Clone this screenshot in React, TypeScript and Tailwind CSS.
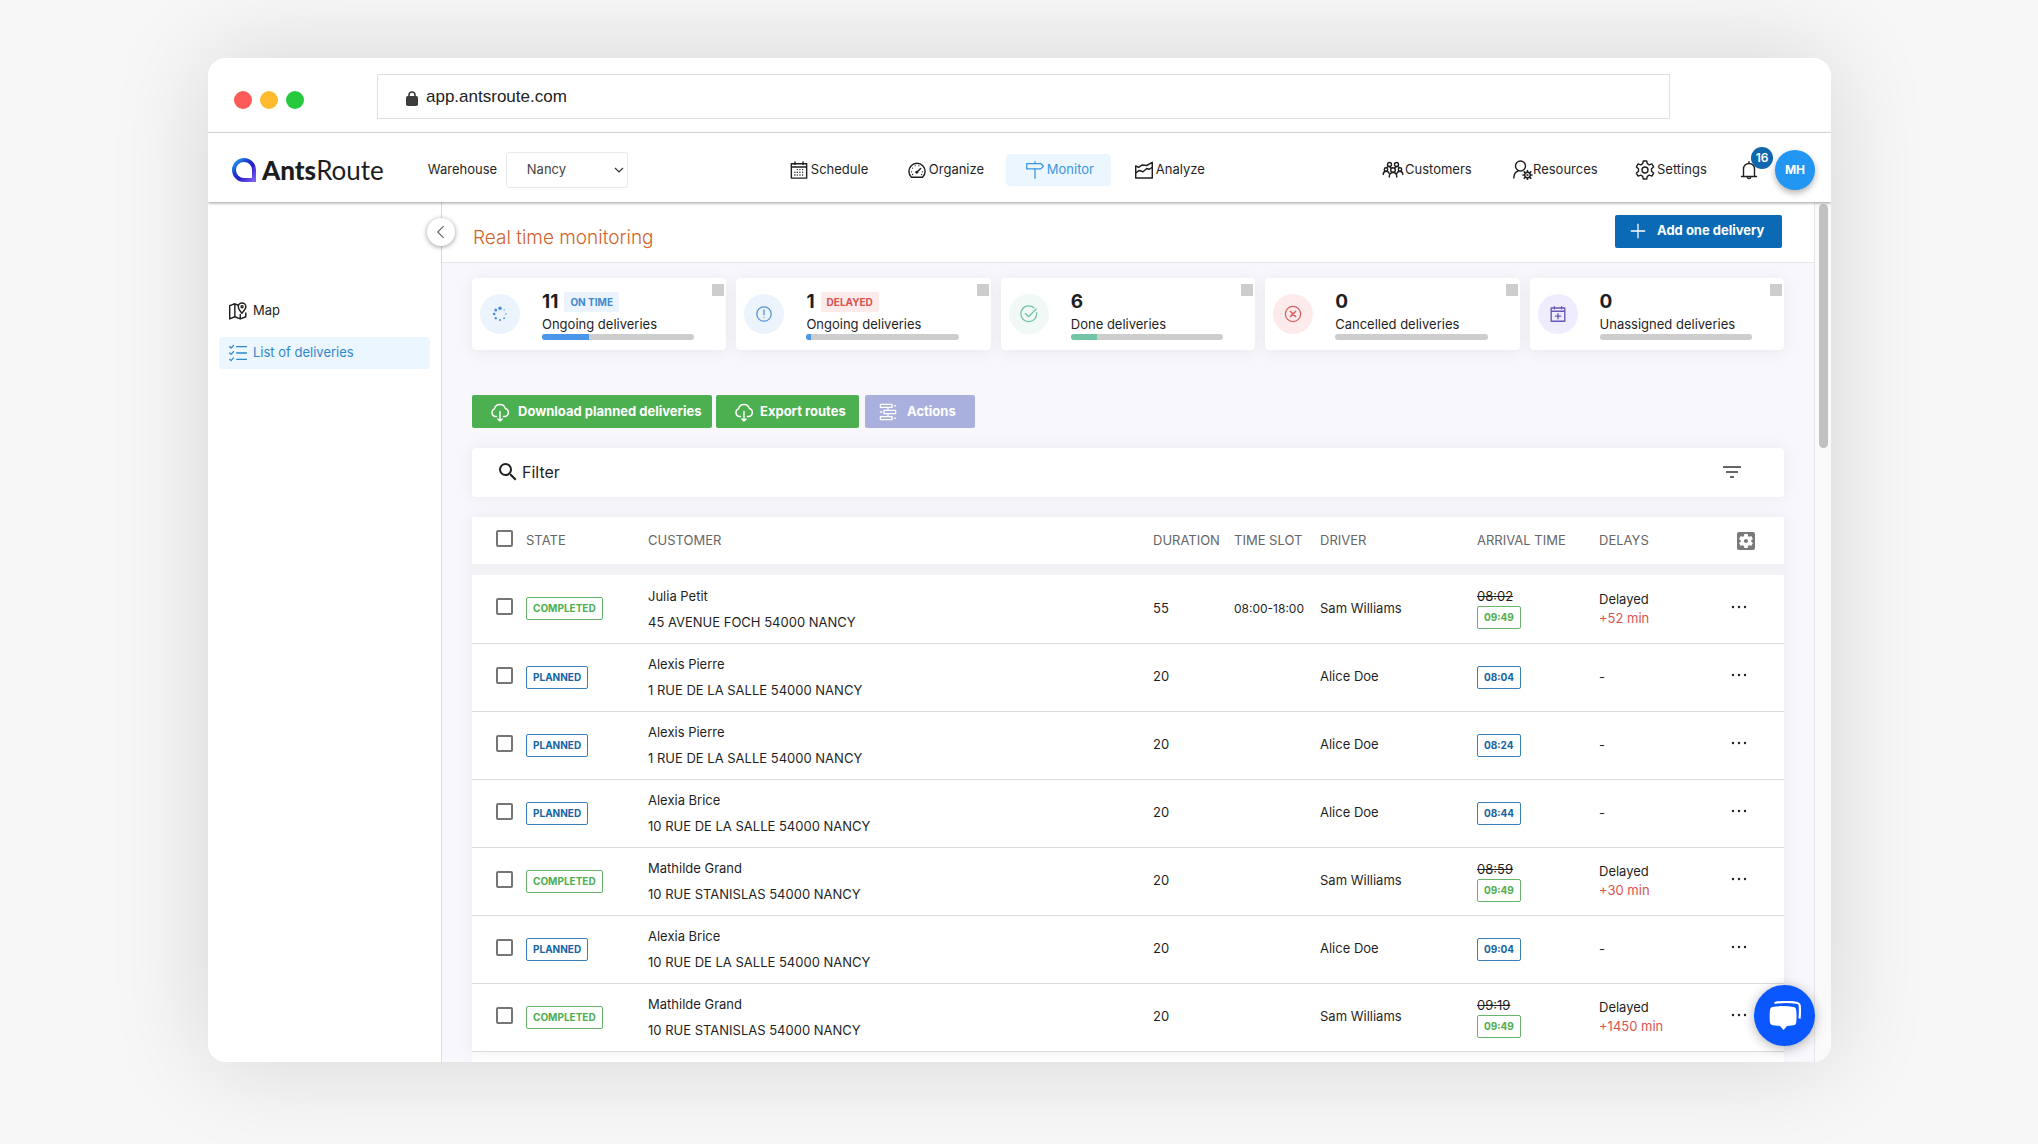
import React, { useState } from "react";
import { clsx } from "clsx";
import { MdFilterList, MdSearch, MdSettingsApplications } from "react-icons/md";

type State = "COMPLETED" | "PLANNED";

interface Delivery {
  state: State;
  customer: string;
  address: string;
  duration: number;
  slot?: string;
  driver: string;
  planned?: string;
  arrival: string;
  delay?: string;
}

const DELIVERIES: Delivery[] = [
  { state: "COMPLETED", customer: "Julia Petit", address: "45 AVENUE FOCH 54000 NANCY", duration: 55, slot: "08:00-18:00", driver: "Sam Williams", planned: "08:02", arrival: "09:49", delay: "+52 min" },
  { state: "PLANNED", customer: "Alexis Pierre", address: "1 RUE DE LA SALLE 54000 NANCY", duration: 20, driver: "Alice Doe", arrival: "08:04" },
  { state: "PLANNED", customer: "Alexis Pierre", address: "1 RUE DE LA SALLE 54000 NANCY", duration: 20, driver: "Alice Doe", arrival: "08:24" },
  { state: "PLANNED", customer: "Alexia Brice", address: "10 RUE DE LA SALLE 54000 NANCY", duration: 20, driver: "Alice Doe", arrival: "08:44" },
  { state: "COMPLETED", customer: "Mathilde Grand", address: "10 RUE STANISLAS 54000 NANCY", duration: 20, driver: "Sam Williams", planned: "08:59", arrival: "09:49", delay: "+30 min" },
  { state: "PLANNED", customer: "Alexia Brice", address: "10 RUE DE LA SALLE 54000 NANCY", duration: 20, driver: "Alice Doe", arrival: "09:04" },
  { state: "COMPLETED", customer: "Mathilde Grand", address: "10 RUE STANISLAS 54000 NANCY", duration: 20, driver: "Sam Williams", planned: "09:19", arrival: "09:49", delay: "+1450 min" },
];

interface IconProps {
  className?: string;
  children?: React.ReactNode;
}

const Icon: React.FC<IconProps> = ({ className = "size-[18px]", children }) => (
  <svg
    viewBox="0 0 20 20"
    fill="none"
    stroke="currentColor"
    strokeWidth="1.4"
    strokeLinecap="round"
    strokeLinejoin="round"
    className={clsx("shrink-0", className)}
    aria-hidden="true"
  >
    {children}
  </svg>
);

const ScheduleIcon = () => (
  <Icon>
    <path d="M1.500 3h17v16h-17zM1.500 6.600h17M5.500 1v3M14.500 1v3" strokeWidth="1.600" />
    <path
      d="M8 9.5h.1M11 9.5h.1M14 9.5h.1M5.4 12.5h.1M8 12.5h.1M11 12.5h.1M14 12.5h.1M5.4 15.5h.1M8 15.5h.1M11 15.5h.1M14 15.5h.1"
      strokeWidth="1.5"
    />
  </Icon>
);

const OrganizeIcon = () => (
  <Icon>
    <path d="M3.800 18A9 9 0 1 1 16.200 18z" strokeWidth="1.600" />
    <path d="M10 12.2l4-3.800" strokeWidth="1.6" />
    <circle cx="9.7" cy="12.5" r="1.3" fill="currentColor" strokeWidth="0.5" />
    <path d="M3.900 12h.1M5 7.800h.1M8 5.300h.1M12 5.300h.1M16.100 12h.1M5 15h.1M15 15h.1" />
  </Icon>
);

const MonitorIcon = () => (
  <Icon>
    <path d="M10 .8v2M10 8.800v10.400" />
    <path d="M.8 2.800h15.600L19.400 5.800l-3 3H.8z" />
  </Icon>
);

const AnalyzeIcon = () => (
  <Icon>
    <path d="M.8 18.800V5.500l3.200 1.500 4-2.600 5 .6 6.200-3.500v17.300z" strokeWidth="1.600" />
    <path d="M.8 13.200l4-2.700 4.200 1.500 4-3.600 2.500.8 3.700-2" strokeWidth="1.600" />
  </Icon>
);

const CustomersIcon = () => (
  <Icon className="h-5 w-[22px]">
    <circle cx="6.500" cy="4.500" r="2" />
    <circle cx="13.500" cy="4.500" r="2" />
    <circle cx="10" cy="10" r="2.300" />
    <circle cx="3" cy="9.500" r="1.700" />
    <circle cx="17" cy="9.500" r="1.700" />
    <path d="M6.200 17c0-3 1.500-4.500 3.800-4.500s3.800 1.500 3.800 4.500M.2 14.500c0-2 1.200-3.300 2.900-3.300s2.600.8 3 2M19.800 14.500c0-2-1.200-3.300-2.900-3.300s-2.600.8-3 2M4 7.200c1.200-1 3-.6 4 .6M16 7.200c-1.200-1-3-.6-4 .6" />
  </Icon>
);

const ResourcesIcon = () => (
  <Icon className="size-5">
    <circle cx="7.500" cy="6" r="5" />
    <path d="M.8 18c.2-4 1.800-6.300 4.300-7" />
    <circle cx="14.500" cy="15" r="2.800" />
    <path d="M14.500 10.600v1.500M14.500 18v1.500M10 15h1.500M17.500 15H19M11.300 11.900l1.100 1.100M16.700 17.200l1.100 1.100M17.700 11.900l-1.100 1.100M12.300 17.200l-1.100 1.100" strokeWidth="1.600" />
    <circle cx="14.500" cy="15" r="0.400" />
  </Icon>
);

const SettingsIcon = () => (
  <Icon className="size-5">
    <circle cx="10" cy="10" r="3" />
    <path d="M8.300 1h3.400l.6 2.700 1.900 1.100 2.700-.9 1.700 3-2.100 1.900v2.400l2.100 1.900-1.700 3-2.700-.9-1.900 1.100-.6 2.700H8.300l-.6-2.700-1.900-1.100-2.700.9-1.700-3 2.100-1.900V8.800L1.400 6.900l1.700-3 2.700.9 1.900-1.100z" />
  </Icon>
);

const BellIcon = () => (
  <Icon className="size-5">
    <path d="M2.500 16.500h15M4.500 16.500V9a5.500 5.500 0 0 1 11 0v7.500M10 3.300V1.800" />
    <path d="M8.300 16.800a1.700 1.800 0 0 0 3.400 0" />
  </Icon>
);

const MapIcon = () => (
  <Icon>
    <path d="M10.200 3.600L6.500 2 .8 4v14.800l5.700-2.400 6 2.400 6.200-2.400v-4.200M6.500 2v14.400M12.500 13.800v5" strokeWidth="1.600" />
    <path d="M14.300 12.500C11.800 9.500 10.300 7.600 10.300 5.300a4.200 4.200 0 0 1 8.400 0c0 2.300-1.700 4.300-4.400 7.200z" strokeWidth="1.600" />
    <circle cx="14.500" cy="5.200" r="1.200" />
  </Icon>
);

const ListIcon = () => (
  <Icon>
    <path d="M8.500 3h11M8.500 10h11M8.500 17h11M.8 3l1.500 1.500 2.700-3M.8 10l1.500 1.500 2.700-3M.8 17l1.500 1.500 2.700-3" />
  </Icon>
);

const CloudIcon = () => (
  <Icon className="size-5">
    <path d="M6.500 14.500H5a4 4 0 0 1-.5-7.600A5.600 5.600 0 0 1 15.300 6.500a4.100 4.100 0 0 1-.3 8h-1.500M10 9.500v9.500M7.800 17l2.200 2 2.200-2" />
  </Icon>
);

const ActionsIcon = () => (
  <Icon className="size-[18px]">
    <path d="M1.500 1.500h13v3.400h-13zM5.500 8.300h13v3.400h-13zM1.500 15.100h13v3.400h-13zM10 4.900v3.400M10 11.700v3.400M17 3.200h1.500M1.500 10H3M17 16.800h1.500" />
  </Icon>
);

const SpinnerIcon = () => (
  <Icon className="size-4">
    <g fill="currentColor" stroke="none">
      <circle cx="10" cy="2.800" r="2.200" />
      <circle cx="4.700" cy="5" r="1.900" />
      <circle cx="2.700" cy="10" r="1.700" />
      <circle cx="4.700" cy="15.200" r="1.500" />
      <circle cx="10" cy="17.400" r="1.300" />
      <circle cx="15.200" cy="15.200" r="1.100" />
      <circle cx="17.400" cy="10" r="0.900" />
      <circle cx="15.200" cy="4.900" r="0.800" />
    </g>
  </Icon>
);

const AlertIcon = () => (
  <Icon className="size-4">
    <circle cx="10" cy="10" r="9" strokeWidth="1.600" />
    <path d="M10 5v6M10 14.500h.1" strokeWidth="1.600" />
  </Icon>
);

const DoneIcon = () => (
  <Icon>
    <path d="M18.500 8.500A8.800 8.800 0 1 1 15.500 3M6 9.500l3.500 3.500 8.500-8.500" />
  </Icon>
);

const CancelIcon = () => (
  <Icon>
    <circle cx="10" cy="10" r="8.500" />
    <path d="M7.200 7.200l5.600 5.600M12.800 7.200l-5.600 5.600" strokeWidth="1.800" />
  </Icon>
);

const UnassignedIcon = () => (
  <Icon className="size-4">
    <path d="M1.500 2.500h17v16.500h-17zM1.500 6.500h17M5.500 1v2.500M14.500 1v2.500M10 9.500v6.500M6.800 12.700h6.500" strokeWidth="1.700" />
  </Icon>
);

const Logo = () => (
  <a href="#home" className="flex items-center gap-1.5 font-[Lato,sans-serif] text-[26px] leading-8 text-[#1d1d1f]">
    <svg viewBox="0 0 24 24" className="size-6" aria-hidden="true">
      <defs>
        <linearGradient id="logo-ring" x1="0" y1="0" x2="1" y2="1">
          <stop offset="0" stopColor="#22a8f5" />
          <stop offset="0.350" stopColor="#1c3fd0" />
          <stop offset="0.600" stopColor="#2a1fc4" />
          <stop offset="1" stopColor="#7a5cf5" />
        </linearGradient>
      </defs>
      <path
        d="M12 2a10 10 0 1 0 0 20h10V12A10 10 0 0 0 12 2z"
        fill="none"
        stroke="url(#logo-ring)"
        strokeWidth="4"
      />
    </svg>
    <span>
      <b className="font-black">Ants</b>
      <span>Route</span>
    </span>
  </a>
);

const NAV = [
  { label: "Schedule", icon: <ScheduleIcon />, width: "w-[114px]" },
  { label: "Organize", icon: <OrganizeIcon />, width: "w-[114px]" },
  { label: "Monitor", icon: <MonitorIcon />, width: "w-[105px]", active: true },
  { label: "Analyze", icon: <AnalyzeIcon />, width: "w-[114px]" },
];

const TopBar = () => (
  <header className="relative z-10 flex h-[69px] shrink-0 items-center bg-white pt-1 pl-6 pr-4 text-[13px] shadow-[0_1px_3px_rgba(0,0,0,0.4)]">
    <Logo />
    <div className="ml-11 flex items-center gap-2">
      <label htmlFor="warehouse" className="w-[70px]">
        Warehouse
      </label>
      <div className="relative">
        <select
          id="warehouse"
          className="h-9 w-[122px] appearance-none rounded-[3px] border border-[#e9e9e9] bg-white pl-5 text-[13px] text-[#444]"
        >
          <option>Nancy</option>
        </select>
        <svg viewBox="0 0 10 6" className="pointer-events-none absolute top-[15px] right-1 w-2.5" aria-hidden="true">
          <path d="M1 1l4 4 4-4" fill="none" stroke="#333" strokeWidth="1.200" />
        </svg>
      </div>
    </div>
    <nav className="ml-[142px] flex gap-1">
      {NAV.map((item) => (
        <a
          key={item.label}
          href={`#${item.label.toLowerCase()}`}
          className={clsx(
            "flex h-8 items-center gap-[3px] rounded pl-5",
            item.width,
            item.active && "bg-[#ebf6fe] text-[#3a95de]"
          )}
        >
          {item.icon}
          {item.label}
        </a>
      ))}
    </nav>
    <div className="ml-auto flex items-center">
      <a href="#customers" className="flex w-[131px] items-center gap-px">
        <CustomersIcon />
        Customers
      </a>
      <a href="#resources" className="flex w-[122px] items-center">
        <ResourcesIcon />
        Resources
      </a>
      <a href="#settings" className="flex w-[104px] items-center gap-0.5">
        <SettingsIcon />
        Settings
      </a>
      <button type="button" aria-label="Notifications" className="relative mr-4">
        <BellIcon />
        <span className="absolute -top-[13px] left-3 flex size-[22px] items-center justify-center rounded-full bg-[#1167ae] text-xs font-semibold text-white">
          16
        </span>
      </button>
      <button
        type="button"
        className="size-10 rounded-full bg-[#2196f3] text-xs font-bold text-white shadow-[0_3px_6px_rgba(0,0,0,0.3)]"
      >
        MH
      </button>
    </div>
  </header>
);

const Sidebar = () => (
  <aside className="relative w-[234px] shrink-0 border-r border-[#d9d9de] bg-white px-[11px] pt-[93px] text-[13px]">
    <button
      type="button"
      aria-label="Collapse menu"
      className="absolute top-4 -right-3.5 z-10 flex size-7 items-center justify-center rounded-full bg-white text-[#666] shadow-[0_1px_5px_rgba(0,0,0,0.4)]"
    >
      <Icon className="size-4">
        <path d="M13 3l-7 7 7 7" />
      </Icon>
    </button>
    <nav className="flex flex-col gap-2.5">
      <a href="#map" className="flex h-8 items-center gap-1.5 rounded px-2.5">
        <MapIcon />
        Map
      </a>
      <a href="#list" className="flex h-8 items-center gap-1.5 rounded bg-[#ebf6fe] px-2.5 text-[#2f86cc]">
        <ListIcon />
        List of deliveries
      </a>
    </nav>
  </aside>
);

interface StatCardProps {
  count: number;
  label: string;
  icon: React.ReactNode;
  iconClass: string;
  tag?: string;
  tagClass?: string;
  progress?: number;
  barClass?: string;
}

const StatCard: React.FC<StatCardProps> = ({ count, label, icon, iconClass, tag, tagClass, progress = 0, barClass }) => (
  <div className="relative flex h-[72px] rounded bg-white pl-2 pr-8 shadow-[0_2px_14px_rgba(60,60,90,0.08)]">
    <div className={clsx("mt-4 mr-[22px] flex size-10 shrink-0 items-center justify-center rounded-full", iconClass)}>
      {icon}
    </div>
    <div className="flex-1 pt-3">
      <div className="flex h-6 items-center gap-1.5">
        <strong className="text-[19px] leading-6 font-bold">{count}</strong>
        {tag && (
          <span className={clsx("rounded-xs px-1.5 text-[10px] leading-5 font-bold", tagClass)}>{tag}</span>
        )}
      </div>
      <p className="text-[13px] leading-5">{label}</p>
      <div className="h-1.5 overflow-hidden rounded-full bg-[#cdcdcd]">
        <div className={clsx("h-full", barClass)} style={{ width: `${progress}%` }} />
      </div>
    </div>
    <span className="absolute top-1.5 right-0.5 size-3 bg-[#cdcdcd]" />
  </div>
);

const Stats = () => (
  <section className="grid grid-cols-5 gap-2.5">
    <StatCard
      count={11}
      label="Ongoing deliveries"
      icon={<SpinnerIcon />}
      iconClass="bg-[#ebf3fd] text-[#4a90d9]"
      tag="ON TIME"
      tagClass="bg-[#ebf4fd] text-[#4189cf]"
      progress={31}
      barClass="bg-[#4a97ea]"
    />
    <StatCard
      count={1}
      label="Ongoing deliveries"
      icon={<AlertIcon />}
      iconClass="bg-[#ebf3fd] text-[#5594d2]"
      tag="DELAYED"
      tagClass="bg-[#fdeaea] text-[#d9534f]"
      progress={3}
      barClass="bg-[#4a97ea]"
    />
    <StatCard
      count={6}
      label="Done deliveries"
      icon={<DoneIcon />}
      iconClass="bg-[#f0f9f6] text-[#74c2a4]"
      progress={17}
      barClass="bg-[#74c5a5]"
    />
    <StatCard count={0} label="Cancelled deliveries" icon={<CancelIcon />} iconClass="bg-[#fdebeb] text-[#d9605f]" />
    <StatCard count={0} label="Unassigned deliveries" icon={<UnassignedIcon />} iconClass="bg-[#efecfd] text-[#6a55b8]" />
  </section>
);

const Badge: React.FC<{ state: State; children: React.ReactNode }> = ({ state, children }) => (
  <span
    className={clsx(
      "inline-block rounded-xs border px-1.5 text-[10px] leading-[21px] font-bold",
      state === "COMPLETED" ? "border-[#68b36b] text-[#4caf50]" : "border-[#3a80b8] text-[#1565a5]"
    )}
  >
    {children}
  </span>
);

const Checkbox: React.FC<{ label: string; checked: boolean; onChange: () => void }> = ({ label, checked, onChange }) => (
  <input
    type="checkbox"
    aria-label={label}
    checked={checked}
    onChange={onChange}
    className="block size-[17px] appearance-none rounded-xs border-2 border-[#757575] checked:bg-[#0b6ab5]"
  />
);

const DeliveryTable = () => {
  const [selected, setSelected] = useState<number[]>([]);
  const allSelected = selected.length === DELIVERIES.length;

  const toggle = (index: number) =>
    setSelected((prev) => (prev.includes(index) ? prev.filter((i) => i !== index) : [...prev, index]));

  return (
    <table className="w-full table-fixed text-left text-[13px] shadow-[0_0_14px_rgba(60,60,90,0.08)]">
      <colgroup>
        <col className="w-[54px]" />
        <col className="w-[122px]" />
        <col />
        <col className="w-[81px]" />
        <col className="w-[86px]" />
        <col className="w-[157px]" />
        <col className="w-[122px]" />
        <col className="w-[111px]" />
        <col className="w-[74px]" />
      </colgroup>
      <thead className="text-[#666]">
        <tr className="h-[47px] bg-white *:font-normal">
          <th className="pb-1 pl-6">
            <Checkbox
              label="Select all"
              checked={allSelected}
              onChange={() => setSelected(allSelected ? [] : DELIVERIES.map((_, i) => i))}
            />
          </th>
          <th>STATE</th>
          <th>CUSTOMER</th>
          <th>DURATION</th>
          <th>TIME SLOT</th>
          <th>DRIVER</th>
          <th>ARRIVAL TIME</th>
          <th>DELAYS</th>
          <th className="pl-6">
            <button type="button" aria-label="Table settings" className="block">
              <MdSettingsApplications className="size-6 text-[#7a7a7a]" />
            </button>
          </th>
        </tr>
        <tr className="h-[11px] bg-[#f1f1f6]" aria-hidden="true">
          <td colSpan={9} />
        </tr>
      </thead>
      <tbody>
        {DELIVERIES.map((row, index) => (
          <tr key={index} className="h-[68px] border-b border-[#dcdcdc] bg-white">
            <td className="pb-1 pl-6">
              <Checkbox label={row.customer} checked={selected.includes(index)} onChange={() => toggle(index)} />
            </td>
            <td>
              <Badge state={row.state}>{row.state}</Badge>
            </td>
            <td className="leading-[26px]">
              <div>{row.customer}</div>
              <div>{row.address}</div>
            </td>
            <td>{row.duration}</td>
            <td className="text-xs">{row.slot}</td>
            <td>{row.driver}</td>
            <td>
              {row.planned && <s className="block h-[18px] leading-4">{row.planned}</s>}
              <Badge state={row.state}>{row.arrival}</Badge>
            </td>
            <td className="leading-[19px]">
              {row.delay ? (
                <>
                  <div>Delayed</div>
                  <div className="text-[#d9534f]">{row.delay}</div>
                </>
              ) : (
                "-"
              )}
            </td>
            <td className="pb-1 pl-5">
              <button type="button" aria-label="Row actions" className="block">
                <svg viewBox="0 0 18 18" className="size-[18px]" fill="#222" aria-hidden="true">
                  <circle cx="3" cy="9" r="1.200" />
                  <circle cx="9" cy="9" r="1.200" />
                  <circle cx="15" cy="9" r="1.200" />
                </svg>
              </button>
            </td>
          </tr>
        ))}
      </tbody>
    </table>
  );
};

const Monitoring = () => (
  <main className="flex min-w-0 flex-1 flex-col overflow-hidden bg-[#f7f7fc]">
    <div className="flex h-[61px] shrink-0 items-center justify-between border-b border-[#e6e6ea] bg-white pl-[31px] pr-8">
      <h1 className="pt-3 text-[19px] font-light text-[#d0632b]">Real time monitoring</h1>
      <button
        type="button"
        className="mb-0.5 flex h-[33px] w-[167px] items-center gap-2.5 rounded-xs bg-[#0b6ab5] pl-3.5 text-[13px] font-bold text-white"
      >
        <Icon>
          <path d="M10 2v16M2 10h16" strokeLinecap="butt" />
        </Icon>
        Add one delivery
      </button>
    </div>
    <div className="flex min-h-0 flex-1 flex-col px-[30px] pt-[15px]">
      <Stats />
      <div className="mt-[45px] flex text-[13px] font-bold text-white">
        <button type="button" className="flex h-[33px] w-60 items-center gap-2 rounded-xs bg-[#4caf50] pl-[18px]">
          <CloudIcon />
          Download planned deliveries
        </button>
        <button type="button" className="ml-1 flex h-[33px] w-[143px] items-center gap-1.5 rounded-xs bg-[#4caf50] pl-[18px]">
          <CloudIcon />
          Export routes
        </button>
        <button type="button" className="ml-1.5 flex h-[33px] w-[110px] items-center gap-2.5 rounded-xs bg-[#a9b0de] pl-3.5">
          <ActionsIcon />
          Actions
        </button>
      </div>
      <div className="mt-5 flex h-[49px] shrink-0 items-center justify-between rounded bg-white pb-0.5 pl-6 pr-10 text-base shadow-[0_0_14px_rgba(60,60,90,0.08)]">
        <button type="button" className="flex items-center gap-0.5">
          <MdSearch className="size-6" />
          Filter
        </button>
        <button type="button" aria-label="Filter options">
          <MdFilterList className="size-6 text-[#666]" />
        </button>
      </div>
      <div className="mt-5 flex-1 bg-white">
        <DeliveryTable />
      </div>
    </div>
  </main>
);

const BrowserBar = () => (
  <div className="flex h-[75px] shrink-0 items-center border-b border-[#e2e2e2] bg-white pt-0.5 pl-[26px] pr-[161px]">
    <div className="flex gap-2 pt-2">
      <span className="size-[18px] rounded-full bg-[#fc5b57]" />
      <span className="size-[18px] rounded-full bg-[#fdbb2d]" />
      <span className="size-[18px] rounded-full bg-[#27c93f]" />
    </div>
    <div className="ml-[73px] flex h-[45px] flex-1 items-center gap-2 border border-[#dfdfdf] pt-0.5 pl-7 font-['Liberation_Sans',Arial,sans-serif] text-[17px] text-[#222]">
      <svg viewBox="0 0 12 15" className="mt-0.5 w-3" aria-hidden="true">
        <path d="M3 6V4a3 3 0 0 1 6 0v2" fill="none" stroke="#3c3c3c" strokeWidth="1.600" />
        <rect y="5" width="12" height="10" rx="1.800" fill="#3c3c3c" />
      </svg>
      <input
        aria-label="Address"
        defaultValue="app.antsroute.com"
        className="min-w-0 flex-1 bg-transparent outline-none"
      />
    </div>
  </div>
);

export default function App() {
  return (
    <div className="h-screen overflow-hidden bg-[#f7f7f7] pt-[58px] pr-[207px] pb-[82px] pl-52 font-[Inter,sans-serif] text-[#1f1f1f]">
      <div className="relative h-full rounded-[18px] shadow-[0_0_100px_rgba(0,0,0,0.14)]">
        <div className="flex h-full flex-col overflow-hidden rounded-[18px] bg-white">
          <BrowserBar />
          <TopBar />
          <div className="flex min-h-0 flex-1">
            <Sidebar />
            <Monitoring />
            <div className="w-[17px] shrink-0 border-l border-[#e6e6ea] bg-[#fafafa] pt-0.5 pl-1">
              <div className="h-[244px] w-[9px] rounded-full bg-[#c1c1c1]" />
            </div>
          </div>
        </div>
        <button
          type="button"
          aria-label="Open chat"
          className="absolute right-4 bottom-4 flex size-[61px] items-center justify-center rounded-full bg-[#0b57ff] shadow-[0_2px_12px_rgba(0,0,0,0.3)]"
        >
          <svg viewBox="0 0 32 30" className="w-8" aria-hidden="true">
            <path
              d="M4 4C12 2.500 19 2.500 27 4c1.500.3 2 1 2.200 2.500.4 4 .4 8-.2 13"
              transform="translate(1.500 -2)"
              fill="none"
              stroke="#fff"
              strokeWidth="2.200"
            />
            <path
              d="M3.500 6C10 4.800 18 4.800 24.500 6c1.800.3 2.500 1.300 2.700 3 .5 4.500.5 8.500 0 12.500-.2 1.700-1 2.500-2.700 2.700l-6.500.8-3.500 4-3.500-4-7-.8C2.200 24 1.200 23 1 21.500.5 17.500.5 13.500 1 9c.2-1.700 1-2.700 2.500-3z"
              fill="#fff"
            />
          </svg>
        </button>
      </div>
    </div>
  );
}
